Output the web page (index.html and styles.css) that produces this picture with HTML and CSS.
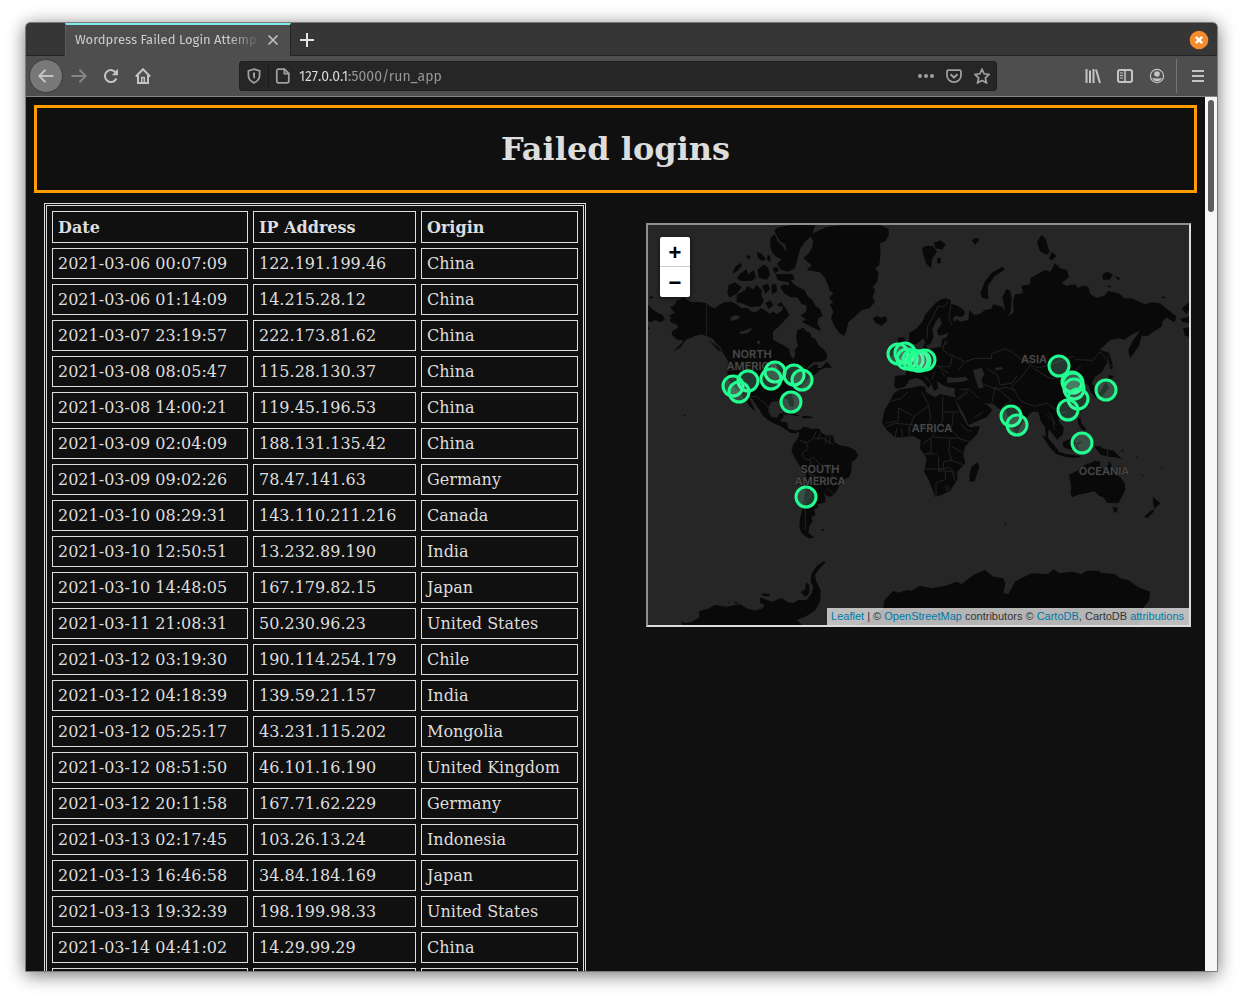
FILE: index.html
```html
<!DOCTYPE html>
<html lang="en">
<head>
<meta charset="utf-8">
<title>Wordpress Failed Login Attempts</title>
<link rel="stylesheet" href="styles.css">
</head>
<body>
<div class="window">
  <header class="tab-strip">
    <div class="tab">
      <span class="tab-title">Wordpress Failed Login Attemp</span>
      <button class="tab-close" aria-label="Close tab"><svg width="12" height="12" viewBox="0 0 12 12"><path d="M1.500 1.500l9 9M10.500 1.500l-9 9" stroke="#c4c4c4" stroke-width="1.600"/></svg></button>
    </div>
    <button class="new-tab" aria-label="New tab"><svg width="16" height="16" viewBox="0 0 16 16"><path d="M8 1v14M1 8h14" stroke="#e4e4e4" stroke-width="2"/></svg></button>
    <button class="window-close" aria-label="Close window"><svg width="20" height="20" viewBox="0 0 20 20"><circle cx="10" cy="10" r="9.300" fill="#f58b2c"/><path d="M6.800 6.800l6.400 6.400M13.200 6.800l-6.400 6.400" stroke="#fff" stroke-width="2.400"/></svg></button>
  </header>

  <nav class="toolbar">
    <button class="tool back" aria-label="Back"><svg viewBox="0 0 16 16"><path d="M15.500 8H1.500M7.500 1.700L1.300 8l6.200 6.300"/></svg></button>
    <button class="tool forward" aria-label="Forward"><svg viewBox="0 0 16 16"><path d="M.5 8h14M8.500 1.700L14.700 8l-6.200 6.300"/></svg></button>
    <button class="tool" aria-label="Reload"><svg viewBox="0 0 16 16"><path d="M13.200 5.200A6 6 0 1 0 13.400 10.500"/><path d="M15 .8v6.400H8.800z" fill="#c4c4c4" stroke="none"/></svg></button>
    <button class="tool" aria-label="Home"><svg viewBox="0 0 16 16"><path d="M.8 8.500L8 1.300l7.200 7.200M3 7v8h10V7"/><path d="M6.700 14v-4.500h2.600V14" stroke-width="1.500"/></svg></button>
    <div class="url-bar">
      <button class="bar-icon" aria-label="Tracking protection"><svg viewBox="0 0 16 16"><path d="M8 1.200l5.600 1.600v4.500c0 3.500-2 6-5.600 7.600-3.600-1.600-5.600-4.100-5.600-7.600V2.800z"/><path d="M7 4.500h2v6.600C7.500 10 7 9 7 7.500z" fill="#a0a0a0" stroke="none"/></svg></button>
      <span class="divider"></span>
      <button class="bar-icon" aria-label="Site information"><svg viewBox="0 0 16 16"><path d="M3.500 1h6l4.300 4.300V13c0 1-.7 1.800-1.800 1.800H3.500c-1 0-1.700-.7-1.700-1.800V2.800C1.800 1.700 2.500 1 3.500 1zM9.300 1v4.700h4.500"/></svg></button>
      <input class="url" type="text" aria-label="Address" value="127.0.0.1:5000/run_app">
      <button class="bar-icon" aria-label="Page actions"><svg viewBox="0 0 16 16" class="solid"><circle cx="2" cy="8" r="2"/><circle cx="8" cy="8" r="2"/><circle cx="14" cy="8" r="2"/></svg></button>
      <button class="bar-icon" aria-label="Save to Pocket"><svg viewBox="0 0 16 16"><path d="M2.500 2h11c1 0 1.500.5 1.500 1.500v3.700a7 7 0 0 1-14 0V3.500C1 2.500 1.500 2 2.500 2z"/><path d="M4.500 6.300L8 9.600l3.500-3.300" stroke-width="2"/></svg></button>
      <button class="bar-icon" aria-label="Bookmark"><svg viewBox="0 0 16 16"><path d="M8 1.300l2.100 4.500 4.900.6-3.600 3.400 1 5L8 12.400l-4.400 2.400 1-5L1 6.400l4.900-.6z"/></svg></button>
    </div>
    <div class="tools-end">
      <button class="tool" aria-label="Library"><svg viewBox="0 0 16 16"><path d="M1.500 1v14M5 2.500V15M8.500 1v14M11 1.500L15 15"/></svg></button>
      <button class="tool" aria-label="Sidebars"><svg viewBox="0 0 16 16"><rect x="1" y="2" width="14" height="12" rx="2"/><path d="M8 2v12" stroke-width="1.500"/><path d="M3 5h3M3 7.500h3M3 10h3" stroke-width="1"/></svg></button>
      <button class="tool" aria-label="Account"><svg viewBox="0 0 16 16"><circle cx="8" cy="8" r="6.600" stroke-width="1.200"/><circle cx="8" cy="6" r="2.800" fill="#c4c4c4" stroke="none"/><path d="M3.300 10c1.400 0 2.400.6 4.700.6s3.300-.6 4.700-.6c-.8 2-2.400 3.300-4.700 3.300S4 12 3.300 10z" fill="#c4c4c4" stroke="none"/></svg></button>
      <span class="tool-divider"></span>
      <button class="tool menu" aria-label="Menu"><svg viewBox="0 0 16 16"><path d="M2 3h12M2 8h12M2 13h12"/></svg></button>
    </div>
  </nav>

  <div class="viewport">
    <main class="page">
      <div class="banner"><h1>Failed logins</h1></div>
      <div class="content">
        <table class="logins">
          <thead><tr><th class="date">Date</th><th class="ip">IP Address</th><th class="origin">Origin</th></tr></thead>
          <tbody>
            <tr><td>2021-03-06 00:07:09</td><td>122.191.199.46</td><td>China</td></tr>
            <tr><td>2021-03-06 01:14:09</td><td>14.215.28.12</td><td>China</td></tr>
            <tr><td>2021-03-07 23:19:57</td><td>222.173.81.62</td><td>China</td></tr>
            <tr><td>2021-03-08 08:05:47</td><td>115.28.130.37</td><td>China</td></tr>
            <tr><td>2021-03-08 14:00:21</td><td>119.45.196.53</td><td>China</td></tr>
            <tr><td>2021-03-09 02:04:09</td><td>188.131.135.42</td><td>China</td></tr>
            <tr><td>2021-03-09 09:02:26</td><td>78.47.141.63</td><td>Germany</td></tr>
            <tr><td>2021-03-10 08:29:31</td><td>143.110.211.216</td><td>Canada</td></tr>
            <tr><td>2021-03-10 12:50:51</td><td>13.232.89.190</td><td>India</td></tr>
            <tr><td>2021-03-10 14:48:05</td><td>167.179.82.15</td><td>Japan</td></tr>
            <tr><td>2021-03-11 21:08:31</td><td>50.230.96.23</td><td>United States</td></tr>
            <tr><td>2021-03-12 03:19:30</td><td>190.114.254.179</td><td>Chile</td></tr>
            <tr><td>2021-03-12 04:18:39</td><td>139.59.21.157</td><td>India</td></tr>
            <tr><td>2021-03-12 05:25:17</td><td>43.231.115.202</td><td>Mongolia</td></tr>
            <tr><td>2021-03-12 08:51:50</td><td>46.101.16.190</td><td>United Kingdom</td></tr>
            <tr><td>2021-03-12 20:11:58</td><td>167.71.62.229</td><td>Germany</td></tr>
            <tr><td>2021-03-13 02:17:45</td><td>103.26.13.24</td><td>Indonesia</td></tr>
            <tr><td>2021-03-13 16:46:58</td><td>34.84.184.169</td><td>Japan</td></tr>
            <tr><td>2021-03-13 19:32:39</td><td>198.199.98.33</td><td>United States</td></tr>
            <tr><td>2021-03-14 04:41:02</td><td>14.29.99.29</td><td>China</td></tr>
            <tr><td>&nbsp;</td><td>&nbsp;</td><td>&nbsp;</td></tr>
          </tbody>
        </table>

        <section class="map" aria-label="Login origins">
          <svg class="world" viewBox="0 0 541 400" preserveAspectRatio="xMinYMin slice">
            <g transform="scale(.33333)">
              <!-- North America, Greenland and the Arctic islands -->
              <g transform="translate(-24 -30)">
                <path class="land" d="M88 315L95 308 86 302 104 294 97 285 90 275 102 272 110 258 130 248 140 254 155 262 178 261 200 265 212 275 225 280 240 268 255 262 272 260 290 268 305 280 320 278 335 290 350 290 362 280 375 285 388 296 400 290 410 298 425 288 430 270 440 285 448 300 430 320 408 342 398 352 400 375 425 388 448 402 450 420 460 432 466 420 464 405 474 392 468 370 472 345 490 338 500 350 510 352 515 368 525 370 535 390 550 402 562 420 558 434 545 440 520 442 505 455 498 466 510 458 524 448 535 450 532 460 545 458 560 440 576 458 556 458 540 464 528 476 510 485 495 500 480 520 456 540 462 560 460 577 450 574 442 552 430 550 415 558 395 560 386 575 385 590 395 606 412 608 418 596 434 592 428 610 420 618 436 622 440 640 465 646 458 652 440 645 422 634 400 624 370 604 355 580 335 550 326 545 334 562 346 590 330 575 315 555 300 530 275 510 264 490 262 470 265 440 248 412 244 400 228 385 220 372 205 365 185 358 165 362 155 368 140 372 120 398 100 408 126 384 130 376 112 374 96 360 95 350 116 336 108 328 96 324z"/>
                <path class="land" d="M24 270L40 285 54 294 68 300 75 314 60 322 44 314 34 322 24 318zM28 247l8-4 6 5-10 3zM24 335l6 5-6 5zM205 375l30 20 12 16-14-6-14-16zM130 598l10 4-8 2z"/>
                <path class="land" d="M510 60L540 45 560 36 600 31 720 31 745 42 747 60 735 80 720 85 722 110 718 150 705 160 716 172 712 200 698 215 706 225 698 245 705 260 690 278 665 286 650 300 625 322 618 350 612 363 596 352 582 330 573 310 580 290 570 268 580 262 567 250 580 235 568 225 565 212 555 190 540 172 520 168 500 165 515 150 490 130 506 115 515 100 520 80zM698 310l14-8 10 6 16-4 4 14-18 14-18-8z"/>
                <path class="land" d="M412 38l40-8h74l-10 30-20 20-15 20-8 30-8 30-20 10-22-6-12-18 16-14-8-16 20-10-4-18-14-8-12-20-6-12zM392 68l12-10 10 22 14 12 10 20-12 22-16-8-14-14-6-20zM350 112l12 2 16 18-10 6-14-8zM318 124l10-4 4 8-8 5zM382 120l8 2 2 18-10-4zM278 170l10-18 14-8 4 8-14 16-14 8zM300 176l20-14 4 16 18-12 6 22-14 10-30 0-14-8zM352 164l20-16 12 10 6 22-10 14-24-6zM398 158l14-2 6 10-14 10zM406 178l50-2 8 16-20 10-30-6zM266 210l18-8 22 14-16 20-22 12-6-14zM290 240l24-14 10-14 16 12 8-14 18 14-2 18 8 14-10 18-30 2-22-10-20-4zM366 212l18-6 6 16-14 14zM394 210l14-4 4 22-16 10zM376 264l14-8 10 14-14 12zM412 268l12-6 6 10-12 4zM420 216l12-8 14 4 2-20 12 14 14 10 20 10 8 16 14 12 10 18 14 10 8 22-12 4-4 16 12 24-16-6-24-12-18-10 12-8-16-10 16-12 2-18-16-6-10-18-24-2-16-10z"/>
                <path class="lake" d="M270 308l16-8 14 4-4 8-22 6zM298 352l18-6 16-8 4 4-12 12-22 4zM350 384l4-8 8 4-6 10zM372 452l28-12 12 8-8 20-8-18-12 2zM398 450l14 0 4 18-10-2z"/>
                <path class="border" d="M200 265V362M265 465H372M324 545l26 0 22 18 16 18"/>
                <path class="land" d="M432 596l18-4 30 10-14 2-16-6-18 2zM486 604l16-2 20 6-16 2-20 0z"/>
              </g>
              <!-- South America and Antarctica -->
              <g transform="translate(-24 585)">
                <path class="land" d="M378 -3l24 0 14 10 26 0 2 20 14 6 20-3-8 10-20-2-20-18zM475 30L484 28 488 20 500 22 514 26 538 26 544 38 560 46 578 46 585 68 600 76 625 80 645 90 654 105 648 118 636 126 634 155 628 170 605 182 598 198 588 215 574 230 560 228 552 215 556 234 555 248 532 253 534 264 523 268 526 284 514 292 518 304 508 318 505 338 522 352 510 356 498 350 484 338 478 320 480 295 486 275 490 245 496 215 498 160 484 145 468 120 454 94 460 72 470 60 478 45z"/>
                <path class="border" d="M480 60l20 10 20-15 8-20M520 55l30 0 30 18M495 62l10 24-18 12 4 18 14 4 16-8 20 22 30 10 6 22-20 30M500 150l14 20-4 60-16 10 2 40 0 50M512 120l-4 40 20 10 20-2M560 205l24 20M540 40l-6 22M558 46l-2 24M570 48l-2 24"/>
                <path class="land" d="M125 603L135 610 155 605 178 592 177 574 205 566 225 555 262 560 300 552 318 564 345 572 368 565 374 555 360 548 360 532 395 545 425 534 442 546 460 549 475 540 500 540 515 520 520 500 512 485 514 462 530 438 552 424 556 428 538 446 525 464 528 482 542 510 540 545 526 570 510 582 492 592 470 600 488 616H125zM482 516l14-8 2-22 10 10 0 24-12 10zM364 520l24 2 2 6-20 0zM260 543l8 2 0 4zM280 547l14 0-4 6zM540 330l14-4-4 6z"/>
                <path class="land" d="M650 615L700 590 730 565 733 540 760 512 775 518 800 510 815 512 840 497 875 505 915 498 950 485 965 492 1000 465 1035 450 1060 470 1090 475 1096 490 1090 520 1105 522 1125 485 1150 472 1175 460 1225 462 1240 448 1258 460 1295 455 1325 462 1340 452 1378 452 1380 458 1425 462 1440 475 1465 480 1495 502 1530 515 1528 540 1505 570 1497 615z"/>
              </g>
              <!-- Europe and Asia -->
              <g transform="translate(801 -30)">
                <path class="land" d="M-18 385L-18 355 5 340 22 320 30 300 45 282 62 264 80 252 92 250 108 256 106 266 128 272 148 286 150 298 140 306 122 302 114 310 120 325 110 345 90 358 72 362 66 348 80 325 74 305 62 320 52 345 56 365 46 388 32 392 26 370 4 388z"/>
                <path class="land" d="M100 350L118 325 124 312 135 320 160 315 163 285 178 300 195 296 210 285 228 282 235 268 262 275 270 290 266 265 262 245 275 222 286 228 290 250 288 285 280 305 296 290 294 260 300 238 325 235 318 212 345 208 346 190 370 176 390 165 406 170 420 145 436 160 456 165 462 186 440 205 455 212 480 208 490 220 500 212 520 215 526 238 545 248 568 242 580 228 610 235 630 250 650 250 690 268 712 262 735 265 760 285 785 305 778 322 755 308 745 315 740 335 715 350 700 362 680 362 672 392 645 430 640 405 652 380 676 345 640 365 630 374 610 370 585 375 570 390 555 405 582 413 578 440 560 472 540 485 530 505 546 525 540 545 526 530 522 512 510 504 494 512 506 525 520 540 522 560 512 580 490 598 462 608 440 604 428 615 446 638 444 658 426 674 412 655 402 642 398 665 412 690 418 702 406 696 392 665 390 635 378 620 370 590 352 590 330 612 316 635 306 655 296 645 284 620 272 588 256 584 235 568 200 563 215 568 232 584 216 606 160 630 148 600 125 560 118 535 120 520 95 516 92 500 104 492 94 480 104 470 118 478 135 470 134 484 160 496 168 505 156 515 120 520 86 512 66 498 70 520 58 528 50 510 38 490 24 478 48 508 40 520 26 500 6 488 -16 494 -30 515 -56 522 -62 512 -60 482 -28 480 -26 462 -44 448 -10 432 10 412 24 402 28 384 40 402 78 395 82 372 96 366z"/>
                <path class="lake" d="M174 465l26-6 8 18-8 16 6 24-14 4-8-20zM98 485l20 4 34-4 8 10-20 6-44 2zM240 458l20-2 4 6-22 4z"/>
                <path class="land" d="M-74 400l18-4 0 22-20 6zM-52 368l20-2 4 28 16 20-4 12-32 2 10-22-12-16zM22 98l14-6 18 2 12 16-14 20-4 30-14-14-10-28zM56 84l20-8 16 12-10 16-20-4zM66 130l10-2 2 16-10 2zM170 76l14-8 10 6-14 16zM196 235l14-36 20-26 32-18 8 8-30 20-22 30 2 40-18-4zM366 80l14-20 12 12 12 40-10 8-20-12zM402 132l8-22 14 12-12 14zM562 180l12-10 20 8-10 16-20 0zM600 184l16 6-6 6zM574 212l14 0-2 6zM738 246l12-2-2 8zM800 280l24-20v22l-10 16zM796 312l28-8v20l-20-2zM804 340l20-4v30l-14-4zM810 405l14-6zM582 412l12 40-4 14-10-20zM580 480l18 4-18 14zM572 500l10 20-22 24-26 4 22-18z"/>
                <path class="border" d="M98 262l-12 14-18-2-12 30-18 30-2 36M108 270l-6 40 8 20M150 440l30-10 50 0 0-14 40-14 20 8 24 20 40 24 20 4 60-20 40-14 10 10 50 2 22-26 30 40 18 4-10 30M345 452l-20 28-34 34 26 44 42 16 36-10 40 30 20-4M355 460l50 30 48-2 46-36M216 460l30 20 10 30 36-6 14-22M206 508l44 16 20-8 30 10M230 566l10-50 50 40-30 20M92 375l-10 30 30 20-8 30-34 0-30-14M80 395l20-14M110 420l38 20-16 24M70 455l30 20M60 470l-10 24M80 470l10 14M20 420l10 30-30 10-26 0M30 440l30 14M132 525l30-4 30 30M120 560l40-40M175 610l30-20M160 530l-30 24M400 590l14 20 4 34M395 600l30 30"/>
              </g>
              <!-- Africa -->
              <g transform="translate(666 315)">
                <path class="land" d="M90 178L110 176 150 168 165 170 168 186 195 202 210 192 255 202 262 225 274 255 292 285 300 292 330 288 322 312 285 350 280 375 286 400 262 425 262 450 240 482 215 495 195 500 188 480 176 450 162 425 170 385 150 355 152 330 130 318 100 322 75 322 50 300 36 278 44 240 62 210 72 190zM322 396l6 14-14 44-14 2-2-20 6-24z"/>
                <path class="border" d="M62 214l30-8 22-20M86 234l46 26 44-34-20-40M86 234l-2 40-36 4M132 260l-16 40M176 226l6 40-14 40M218 200v46h50M218 246l0 26-32 48M50 290l26-10 50 4 40 6M76 320l4-24M98 320l-4-22M118 318l0-30M160 340l30-20 40 4 30 0 40 12M182 324l2 44-30 6M250 250l-6 50 30 30M270 280l20 20 16 4M240 326l-4 40 10 24-26 6 0 20-56 2M246 350l34 20M206 380l0 44 20-2 0 26-28 12 0 38M206 420l30-8 20 18M226 424l20 0 10 30M168 372h34M240 390l40 14M226 472l8-4 4 6-6 8z"/>
              </g>
              <!-- South-East Asia and Oceania -->
              <g transform="translate(1056 345)">
                <path class="land" d="M207 405L225 395 245 388 252 376 262 372 278 366 284 362 302 366 298 380 318 392 328 362 338 385 342 402 362 412 374 430 376 450 356 488 340 490 322 488 310 472 298 468 284 454 258 460 236 464 216 472 212 460 214 440zM338 500l16 4-4 12-8 2zM458 470l12 10 12 10-10 8-8 8-4-12zM432 530l20-18 12-4-8 14-14 12z"/>
                <path class="land" d="M126 286l14 6 20 20 18 24 20 6 28 4-2 8-30-4-26-8-20-22zM188 306l30-12 10 14-14 22-24-8zM228 310l14-6 4 4-14 6 6 18-8 2zM284 318l14 0 14 8 30 6 14 16 10 10-20-6-20-2-24-6-14-18zM220 346l24 2-4 4-22 0zM234 234l8 0 2 16 14 16-6 8-10-10-8-14zM360 334l12-6-2 6zM406 348l8 4-2 4zM420 400l12 8-2 2zM478 388l10-6-2 4zM14 550l6 2-4 6z"/>
                <path class="border" d="M323 325v26"/>
              </g>
            </g>
            <g class="label">
              <text x="104" y="133">NORTH</text><text x="104" y="145">AMERICA</text>
              <text x="172" y="248">SOUTH</text><text x="172" y="260">AMERICA</text>
              <text x="284" y="207">AFRICA</text><text x="386" y="138">ASIA</text>
              <text x="456" y="250">OCEANIA</text>
            </g>
            <g class="marker">
              <circle cx="250" cy="129" r="10"/><circle cx="257" cy="128" r="10"/><circle cx="259" cy="134" r="10"/><circle cx="265" cy="135" r="10"/><circle cx="270" cy="136" r="10"/><circle cx="272" cy="136" r="10"/><circle cx="277" cy="135" r="10"/>
              <circle cx="127" cy="147" r="10"/><circle cx="123" cy="154" r="10"/><circle cx="100" cy="156" r="10"/><circle cx="85" cy="161" r="10"/><circle cx="91" cy="167" r="10"/><circle cx="146" cy="150" r="10"/><circle cx="154" cy="155" r="10"/><circle cx="143" cy="177" r="10"/>
              <circle cx="411" cy="141" r="10"/><circle cx="424" cy="157" r="10"/><circle cx="425" cy="158" r="10"/><circle cx="426" cy="164" r="10"/><circle cx="430" cy="174" r="10"/><circle cx="420" cy="185" r="10"/><circle cx="458" cy="165" r="10"/>
              <circle cx="363" cy="191" r="10"/><circle cx="369" cy="200" r="10"/><circle cx="434" cy="218" r="10"/><circle cx="158" cy="272" r="10"/>
            </g>
          </svg>
          <div class="zoom-control">
            <button aria-label="Zoom in">+</button>
            <button aria-label="Zoom out">−</button>
          </div>
          <p class="attribution"><a href="#leaflet">Leaflet</a> | © <a href="#osm">OpenStreetMap</a> contributors © <a href="#carto">CartoDB</a>, CartoDB <a href="#attributions">attributions</a></p>
        </section>
      </div>
    </main>
    <div class="scrollbar"><div class="thumb"></div></div>
  </div>
</div>
</body>
</html>
```
FILE: styles.css
```css
* { box-sizing: border-box; }

body {
  margin: 0;
  height: 100vh;
  padding: 22px 25px 28px;
  background: #fff;
  overflow: hidden;
}

button {
  border: 0;
  padding: 0;
  background: none;
  color: inherit;
  display: flex;
  align-items: center;
  justify-content: center;
}

.window {
  height: 100%;
  display: flex;
  flex-direction: column;
  border: 1px solid #7b7b7b;
  border-radius: 5px 5px 0 0;
  overflow: hidden;
  box-shadow: 0 3px 18px rgba(0, 0, 0, .55);
  font-family: "Fira Sans", Roboto, sans-serif;
  font-size: 14px;
}

/* Tabs */
.tab-strip {
  flex: none;
  display: flex;
  align-items: center;
  height: 33px;
  padding: 1px 8px 0 39px;
  background: #363636;
  border-bottom: 1px solid #242424;
}

.tab {
  display: flex;
  align-items: center;
  align-self: flex-end;
  width: 226px;
  height: 33px;
  margin-bottom: -1px;
  padding: 0 11px 2px 9px;
  background: #4e4e4e;
  border-top: 2px solid #7fe8e8;
  border-left: 1px solid #5c5c5c;
  border-right: 1px solid #242424;
}

.tab-title {
  flex: 1;
  white-space: nowrap;
  color: #ccc;
  font-size: 13px;
  -webkit-mask-image: linear-gradient(90deg, #000 82%, transparent);
  mask-image: linear-gradient(90deg, #000 82%, transparent);
}

.tab-close { width: 12px; margin-left: 6px; }
.new-tab { width: 16px; margin-left: 8px; }
.window-close { width: 20px; margin-left: auto; }

/* Toolbar */
.toolbar {
  flex: none;
  display: flex;
  align-items: center;
  height: 41px;
  padding: 0 3px;
  background: #4e4e4e;
  border-bottom: 1px solid #858585;
}

.tool { width: 32px; height: 32px; }

.tool svg,
.bar-icon svg {
  width: 16px;
  height: 16px;
  fill: none;
  stroke: #c4c4c4;
  stroke-width: 2;
}

.back { width: 34px; height: 34px; border: 1px solid #3c3c3c; border-radius: 50%; background: #787878; }
.forward svg { stroke: #848484; }
.menu { margin-left: 5px; }

.url-bar {
  flex: 1;
  display: flex;
  align-items: center;
  height: 30px;
  margin: 0 80px;
  padding: 0 6px;
  background: #262626;
  border: 1px solid #202020;
  border-radius: 3px;
}

.bar-icon { flex: none; width: 16px; height: 28px; margin-right: 12px; }
.bar-icon svg { stroke: #a0a0a0; stroke-width: 1.75; }
.bar-icon svg.solid { fill: #a0a0a0; stroke: none; }
.bar-icon:last-child { margin-right: 0; }
.bar-icon:first-child { margin-right: 6px; }
.divider { width: 1px; height: 22px; margin-right: 6px; background: #1a1a1a; }

.url {
  flex: 1;
  min-width: 0;
  margin-left: -4px;
  padding: 0;
  border: 0;
  font: inherit;
  color: transparent;
  /* host bright, port and path dimmed */
  background: linear-gradient(90deg, #dedede 50px, #9a9a9a 50px);
  -webkit-background-clip: text;
  background-clip: text;
}

.tools-end { display: flex; align-items: center; }
.tool-divider { width: 1px; height: 34px; margin-left: 3px; background: #757575; }

/* Page */
.viewport {
  flex: 1;
  min-height: 0;
  display: flex;
  background: #101010;
}

.page {
  flex: 1;
  padding: 8px;
  overflow: hidden;
  color: #ddd;
  font: 16px "DejaVu Serif", serif;
}

.banner { padding: 22px 0; border: 3px solid #ff9d00; }
.banner h1 { margin: 0; font-size: 32px; line-height: 38px; text-align: center; }

.content {
  display: flex;
  align-items: flex-start;
  gap: 60px;
  padding: 10px 6px 0 10px;
}

.logins {
  flex: none;
  border: 3px double #ddd;
  border-collapse: separate;
  border-spacing: 5px;
}

.logins th,
.logins td {
  padding: 5px;
  border: 1px solid #ddd;
  line-height: 19px;
  text-align: left;
  white-space: nowrap;
}

.logins th { padding-top: 6px; }
.date { width: 196px; }
.ip { width: 163px; }
.origin { width: 157px; }

/* Map */
.map {
  flex: 1;
  position: relative;
  height: 404px;
  margin-top: 20px;
  border: 2px solid;
  border-color: #8f8f8f #ddd #ddd #8f8f8f;
  background: #262626;
  overflow: hidden;
}

.world { display: block; width: 100%; height: 100%; }
.land { fill: #090909; }
.lake { fill: #262626; }
.border { fill: none; stroke: #232323; stroke-width: 3; }

.label {
  fill: #484848;
  stroke: #111;
  stroke-width: 1;
  paint-order: stroke;
  font: 600 11px Inter, sans-serif;
  text-anchor: middle;
}

.marker {
  fill: rgba(140, 245, 195, .2);
  stroke: #20ff90;
  stroke-width: 3;
}

.zoom-control {
  position: absolute;
  top: 12px;
  left: 12px;
  width: 30px;
  border-radius: 2px;
  background: #fff;
  box-shadow: 0 1px 4px rgba(0, 0, 0, .65);
}

.zoom-control button {
  width: 30px;
  height: 30px;
  padding-top: 2px;
  color: #000;
  font: bold 22px "Liberation Sans", sans-serif;
}

.zoom-control button:first-child { border-bottom: 1px solid #ccc; }

.attribution {
  position: absolute;
  right: 0;
  bottom: 0;
  margin: 0;
  padding: 0 5px 0 4px;
  background: rgba(255, 255, 255, .7);
  color: #333;
  font: 11px/17px "Liberation Sans", sans-serif;
  white-space: nowrap;
}

.attribution a { color: #0078a8; text-decoration: none; }

.scrollbar { flex: none; width: 12px; padding: 3px; background: #f6f6f6; }
.thumb { height: 112px; border-radius: 3px; background: #5c5c5c; }
```
